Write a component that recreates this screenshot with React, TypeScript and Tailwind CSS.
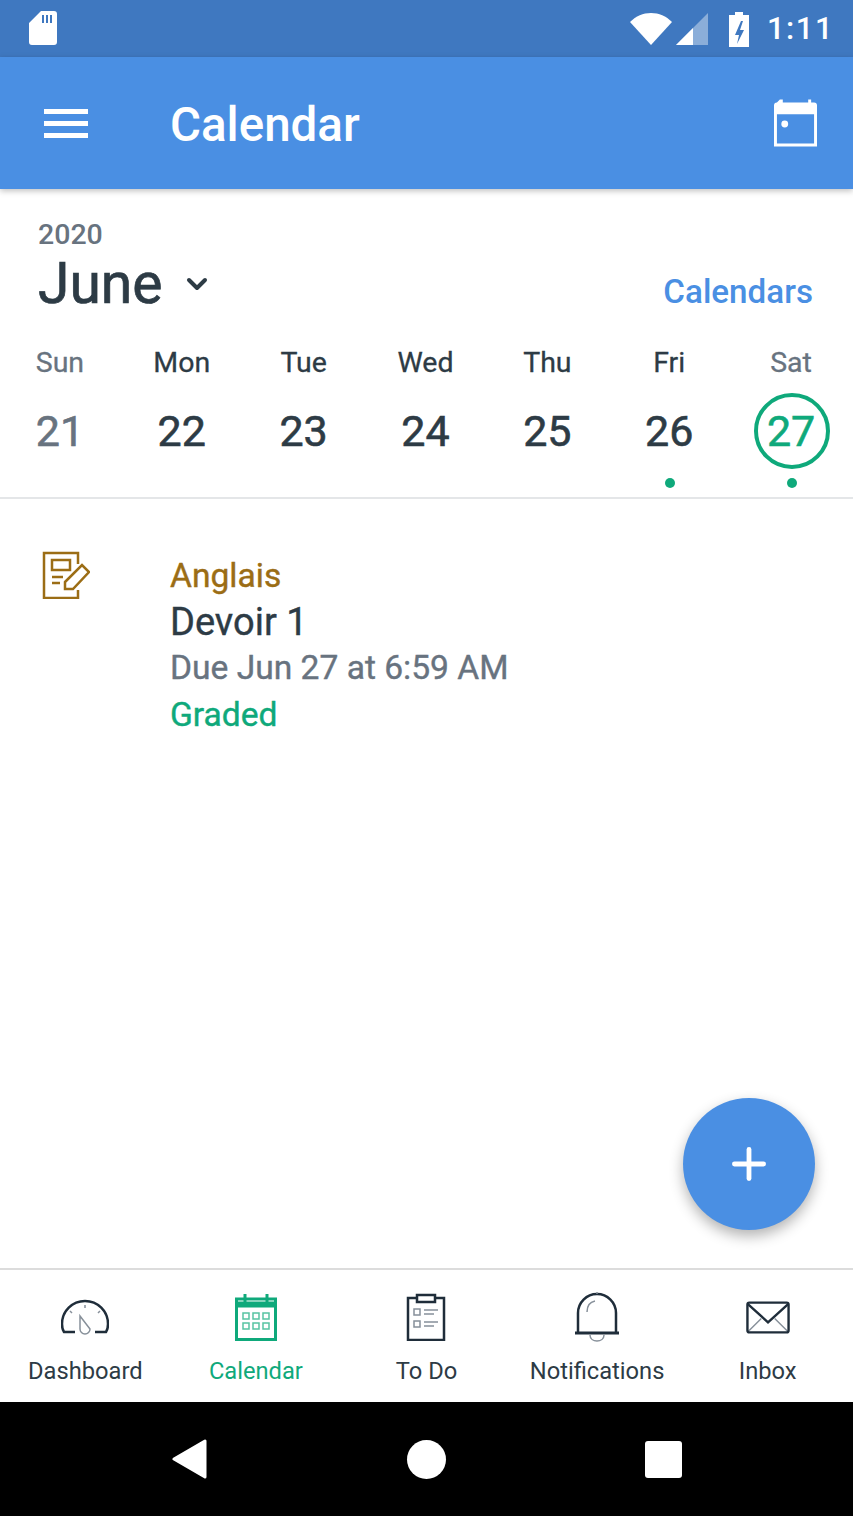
import { ChevronDown, Plus } from "lucide-react";

const days = [
  { name: "Sun", num: "21", muted: true },
  { name: "Mon", num: "22" },
  { name: "Tue", num: "23" },
  { name: "Wed", num: "24" },
  { name: "Thu", num: "25" },
  { name: "Fri", num: "26", dot: true },
  { name: "Sat", num: "27", muted: true, dot: true, today: true },
];

const StatusBar = () => (
  <div className="h-[57px] bg-[#3f78c0] flex items-center justify-between pl-[28px] pr-[19px] text-white">
    <svg width="30" height="36" viewBox="0 0 30 36" className="mt-[-1px]">
      <path fillRule="evenodd" fill="#fff" d="M13 1h13a3 3 0 0 1 3 3v28a3 3 0 0 1-3 3H4a3 3 0 0 1-3-3V13zM14 5v8h2V5zM18 5v8h2V5zM22 5v8h2V5z" />
    </svg>
    <div className="flex items-center">
      <svg width="44" height="36" viewBox="0 0 44 36">
        <path fill="#fff" d="M22 34 1 11C7 5 14 2 22 2s15 3 21 9z" />
      </svg>
      <svg width="34" height="36" viewBox="0 0 34 36" className="ml-[2px]">
        <path fill="#fff" fillOpacity="0.4" d="M33 2v32H1z" />
        <path fill="#fff" d="M18 17v17H1z" />
      </svg>
      <svg width="24" height="36" viewBox="0 0 24 36" className="ml-[18px]">
        <path fillRule="evenodd" fill="#fff" d="M8 1h8v3h6v32H2V4h6zM14 10l-6 14h4l-2 9 7-14h-4l3-9z" />
      </svg>
      <span className="ml-[16px] font-medium text-[31px] leading-none tracking-[1.5px]">1:11</span>
    </div>
  </div>
);

const Header = () => (
  <header className="relative h-[132px] bg-[#4a8fe3] flex items-center shadow-[0_2px_6px_rgba(0,0,0,0.25)]">
    <div className="ml-[44px] w-[44px] flex flex-col gap-[7px]">
      <div className="h-[5px] bg-white" />
      <div className="h-[5px] bg-white" />
      <div className="h-[5px] bg-white" />
    </div>
    <h1 className="ml-[82px] text-[47.5px] font-medium text-white leading-none mt-[5px]">Calendar</h1>
    <svg width="43" height="48" viewBox="0 0 44 48" className="ml-auto mr-[36px]">
      <path fillRule="evenodd" fill="#fff" d="M6 0h3v3h26V0h3v3h3a3 3 0 0 1 3 3v42H0V6a3 3 0 0 1 3-3zM3 15v30h38V15z" />
      <circle cx="11" cy="25" r="3.5" fill="#fff" />
    </svg>
  </header>
);

const WeekStrip = () => (
  <div className="grid grid-cols-7 mt-[30px] h-[152px] border-b-2 border-[#e4e6e8]">
    {days.map((d) => (
      <div key={d.name} className="flex flex-col items-center">
        <span className={`pr-[2px] text-[28.5px] [-webkit-text-stroke:0.3px] leading-[32px] ${d.muted ? "text-[#68737f]" : "text-[#2d3b45]"}`}>{d.name}</span>
        <div className={`mt-[14px] pr-[2px] w-[76px] h-[76px] rounded-full flex items-center justify-center text-[43px] [-webkit-text-stroke:0.6px] ${d.today ? "border-[4px] border-[#0fa97b] text-[#0fa97b]" : d.muted ? "text-[#68737f]" : "text-[#2d3b45]"}`}>
          {d.num}
        </div>
        {d.dot && <div className="mt-[9px] w-[10px] h-[10px] rounded-full bg-[#0fa97b]" />}
      </div>
    ))}
  </div>
);

const AssignmentIcon = () => (
  <svg width="48" height="48" viewBox="0 0 48 48" fill="none" stroke="#9b6d15" strokeWidth="2.5">
    <path d="M36 13V2H2v45h34v-8" />
    <path d="M10 9h18v10H10zM10 26h11M10 32h8" />
    <path d="M23 31 40 14l7 7-16 17h-8z" />
  </svg>
);

const DashboardIcon = () => (
  <svg width="48" height="36" viewBox="0 0 48 36" fill="none">
    <path d="M14 33H3C1 30 1 27 1 25a23 23 0 0 1 46 0c0 2 0 5-2 8H34" stroke="#1f2d3a" strokeWidth="2.5" />
    <path d="M19 17l0 13a5 5 0 0 0 10 0z" stroke="#87909a" strokeWidth="1.5" />
    <path d="M24 6v3M9 12l2 2M39 12l-2 2" stroke="#87909a" strokeWidth="1.5" />
  </svg>
);

const CalendarIcon = () => (
  <svg width="42" height="48" viewBox="0 0 42 48" fill="none" stroke="#0fa97b">
    <path d="M1.5 6h39v40.500h-39z" strokeWidth="3" />
    <path d="M1.500 10h39M1.500 13h39" strokeWidth="3" />
    <path d="M10 1v8M32 1v8" strokeWidth="3" />
    <path d="M8 20h6v6H8zM18 20h6v6h-6zM28 20h6v6h-6zM8 30h6v6H8zM18 30h6v6h-6zM28 30h6v6h-6z" strokeWidth="1.500" opacity="0.7" />
  </svg>
);

const TodoIcon = () => (
  <svg width="40" height="48" viewBox="0 0 40 48" fill="none">
    <path d="M11 5H2v42h36V5h-9" stroke="#1f2d3a" strokeWidth="2.5" />
    <path d="M11 2h18v7H11z" stroke="#1f2d3a" strokeWidth="2.5" />
    <path d="M8 16h6v6H8zM8 28h6v6H8zM18 17h14M18 21h10M18 29h14M18 33h10" stroke="#87909a" strokeWidth="1.5" />
  </svg>
);

const BellIcon = () => (
  <svg width="46" height="50" viewBox="0 0 46 50" fill="none">
    <path d="M4 40V21a19 19 0 0 1 38 0v19" stroke="#1f2d3a" strokeWidth="2.5" />
    <path d="M1 41h44" stroke="#1f2d3a" strokeWidth="3" />
    <path d="M16 43c0 8 14 8 14 0M13 20c0-6 3-10 8-11M23 0v2" stroke="#87909a" strokeWidth="1.5" />
  </svg>
);

const InboxIcon = () => (
  <svg width="44" height="33" viewBox="0 0 46 34" fill="none">
    <path d="M2 32l14-14M44 32 30 18" stroke="#87909a" strokeWidth="1.5" />
    <path d="M2 3l21 19L44 3" stroke="#1f2d3a" strokeWidth="2.5" />
    <rect x="1.5" y="1.5" width="43" height="31" rx="2" stroke="#1f2d3a" strokeWidth="2.5" />
  </svg>
);

const navItems = [
  { label: "Dashboard", icon: <DashboardIcon /> },
  { label: "Calendar", icon: <CalendarIcon />, active: true },
  { label: "To Do", icon: <TodoIcon /> },
  { label: "Notifications", icon: <BellIcon /> },
  { label: "Inbox", icon: <InboxIcon /> },
];

const BottomNav = () => (
  <nav className="h-[134px] bg-white border-t-2 border-[#dcdcdc] grid grid-cols-5">
    {navItems.map((item) => (
      <div key={item.label} className="flex flex-col items-center">
        <div className="h-[52px] mt-[21px] flex items-center justify-center">{item.icon}</div>
        <span className={`mt-[14px] text-[23.7px] leading-[28px] whitespace-nowrap ${item.active ? "text-[#0fa97b]" : "text-[#2d3b45]"}`}>{item.label}</span>
      </div>
    ))}
  </nav>
);

const SystemBar = () => (
  <div className="h-[114px] bg-black flex items-center justify-center gap-[199px]">
    <svg width="36" height="40" viewBox="0 0 36 40">
      <path fill="#fff" stroke="#fff" strokeWidth="3" strokeLinejoin="round" d="M33 2v36L2 20z" />
    </svg>
    <div className="w-[39px] h-[39px] rounded-full bg-white" />
    <div className="w-[37px] h-[37px] rounded-[3px] bg-white" />
  </div>
);

export default function App() {
  return (
    <div className="relative w-[853px] h-[1516px] flex flex-col bg-white overflow-hidden font-['Roboto',sans-serif]">
      <StatusBar />
      <Header />

      <main className="flex-1 flex flex-col">
        <div className="flex justify-between items-end pl-[38px] pr-[40px] pt-[30px]">
          <div>
            <p className="text-[28.5px] font-medium text-[#68737f] leading-[32px]">2020</p>
            <div className="flex items-center">
              <span className="text-[57px] [-webkit-text-stroke:0.7px] text-[#2d3b45] leading-[66px]">June</span>
              <ChevronDown className="ml-[18px] text-[#2d3b45]" size={32} strokeWidth={3} />
            </div>
          </div>
          <a className="text-[33.2px] font-medium text-[#4a8fe3] leading-[40px] mb-[5px]">Calendars</a>
        </div>

        <WeekStrip />

        <section className="flex pt-[50px]">
          <div className="w-[171px] pl-[42px] pt-[2px]">
            <AssignmentIcon />
          </div>
          <div className="pt-[4px] ml-[-1px] [-webkit-text-stroke:0.4px]">
            <p className="text-[33.6px] text-[#9b6d15] leading-[46px]">Anglais</p>
            <p className="text-[38px] text-[#2d3b45] leading-[46px]">Devoir 1</p>
            <p className="text-[33.6px] text-[#68737f] leading-[46px]">Due Jun 27 at 6:59 AM</p>
            <p className="text-[33.6px] text-[#0fa97b] leading-[48px]">Graded</p>
          </div>
        </section>
      </main>

      <button className="absolute left-[683px] top-[1098px] w-[132px] h-[132px] rounded-full bg-[#4a8fe3] flex items-center justify-center shadow-[0_6px_14px_rgba(0,0,0,0.3)]">
        <Plus className="text-white" size={50} strokeWidth={2.3} />
      </button>

      <BottomNav />
      <SystemBar />
    </div>
  );
}
